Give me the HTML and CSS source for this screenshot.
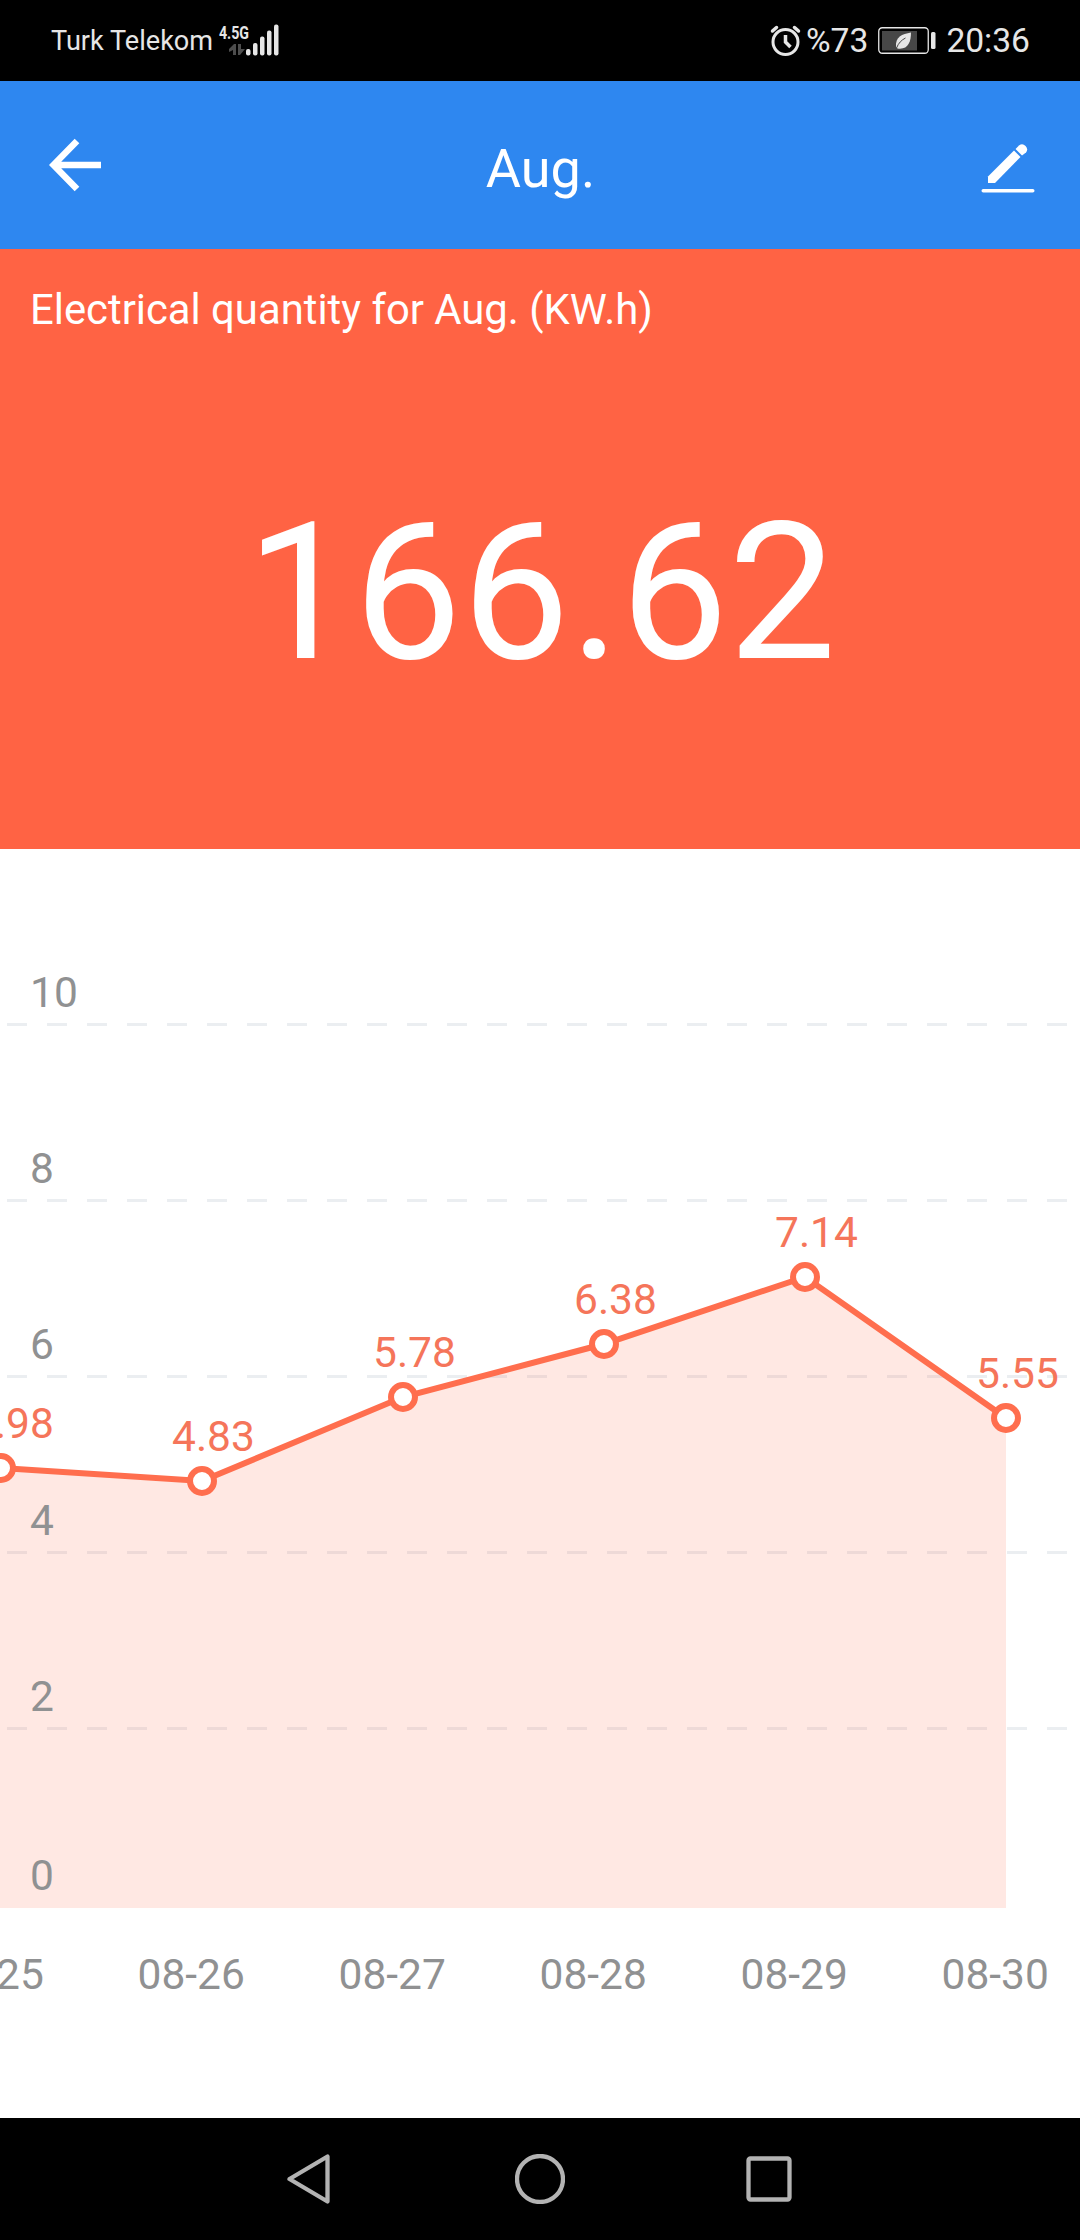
FILE: index.html
```
<!DOCTYPE html>
<html lang="en">
<head>
    <meta charset="UTF-8">
    <meta name="viewport" content="width=device-width, initial-scale=1.0">
    <title>Aug.</title>
    <link rel="stylesheet" href="styles.css">
</head>
<body>
    <div class="status-bar">
        <span class="carrier">Turk Telekom</span>
        <svg class="signal" width="62" height="34" viewBox="0 0 62 34">
            <text class="signal-type" x="0" y="15" textLength="30" lengthAdjust="spacingAndGlyphs">4.5G</text>
            <path d="M10 28v-3l5-5h2v11h-3v-5zM19 20h3v5h4l-5 6h-2z" fill="#4d4d4d"/>
            <g fill="#e6e6e6">
                <rect x="27" y="25" width="4.5" height="6.5" rx="2"/>
                <rect x="34" y="19" width="4.5" height="12.5" rx="2"/>
                <rect x="41" y="12.5" width="4.5" height="19" rx="2"/>
                <rect x="48" y="6.5" width="4.5" height="25" rx="2"/>
                <rect x="55" y="0.5" width="4.5" height="31" rx="2"/>
            </g>
        </svg>
        <div class="status-right">
            <svg width="32" height="32" viewBox="0 0 32 32" fill="none" stroke="#e6e6e6">
                <circle cx="15.5" cy="17" r="12.5" stroke-width="3"/>
                <path d="M15.5 10v7l5 5" stroke-width="3.5"/>
                <path d="M2.500 6l4-3.500M28.500 6l-4-3.500" stroke-width="3.5" stroke-linecap="round"/>
            </svg>
            <span class="battery-level">%73</span>
            <svg class="battery" width="59" height="28" viewBox="0 0 59 28">
                <rect x="0.75" y="0.75" width="49.5" height="25.5" rx="3.5" fill="none" stroke="#e6e6e6" stroke-width="1.3"/>
                <rect x="4" y="4" width="35" height="19.5" fill="#474747"/>
                <path d="M18 20C17 10 24 7 33 5.5C33 15 30 23 19.5 21.5z" fill="#e6e6e6"/>
                <path d="M18.5 21c2-5 5-8 9-10" fill="none" stroke="#474747" stroke-width="1"/>
                <rect x="53" y="5" width="4.5" height="17" rx="1.5" fill="#e6e6e6"/>
            </svg>
            <span class="clock">20:36</span>
        </div>
    </div>

    <div class="header">
        <svg width="54" height="54" viewBox="0 0 54 54" fill="none" stroke="#fff" stroke-width="6.5">
            <path d="M52 27H5M28 3L4.500 27l23.500 24"/>
        </svg>
        <h1>Aug.</h1>
        <svg class="edit" width="54" height="54" viewBox="0 0 54 54" fill="#fff">
            <path d="M7 34.5L33 8.500l6.500 6.500-25.500 26H7z"/>
            <path d="M34.500 7l3.500-3.500a5 5 0 0 1 7 7L41 13.500z"/>
            <rect x="0.500" y="47" width="53" height="3.500" rx="1.750"/>
        </svg>
    </div>

    <div class="summary">
        <div class="summary-title">Electrical quantity for Aug. (KW.h)</div>
        <div class="summary-value">166.62</div>
    </div>

    <svg class="chart" width="1080" height="1269" viewBox="0 849 1080 1269">
        <g class="grid">
            <path d="M7 1024.500H1067"/>
            <path d="M7 1200.500H1067"/>
            <path d="M7 1376.500H1067"/>
            <path d="M7 1552.500H1067"/>
            <path d="M7 1728.500H1067"/>
        </g>
        <path class="area" d="M0 1468L1 1468L202 1481L403 1397L604 1344L805 1277L1006 1418V1908H0z"/>
        <path class="line" d="M1 1468L202 1481L403 1397L604 1344L805 1277L1006 1418"/>
        <g class="points">
            <circle cx="1" cy="1468" r="12"/>
            <circle cx="202" cy="1481" r="12"/>
            <circle cx="403" cy="1397" r="12"/>
            <circle cx="604" cy="1344" r="12"/>
            <circle cx="805" cy="1277" r="12"/>
            <circle cx="1006" cy="1418" r="12"/>
        </g>
        <g class="values">
            <text x="-29" y="1438">4.98</text>
            <text x="172" y="1451">4.83</text>
            <text x="373" y="1367">5.78</text>
            <text x="574" y="1314">6.38</text>
            <text x="775" y="1247">7.14</text>
            <text x="976" y="1388">5.55</text>
        </g>
        <g class="axis">
            <text x="30" y="1007">10</text>
            <text x="30" y="1183">8</text>
            <text x="30" y="1359">6</text>
            <text x="30" y="1535">4</text>
            <text x="30" y="1711">2</text>
            <text x="30" y="1890">0</text>
            <text x="-63.500" y="1989">08-25</text>
            <text x="137.500" y="1989">08-26</text>
            <text x="338.500" y="1989">08-27</text>
            <text x="539.500" y="1989">08-28</text>
            <text x="740.500" y="1989">08-29</text>
            <text x="941.500" y="1989">08-30</text>
        </g>
    </svg>

    <div class="nav-bar">
        <svg width="50" height="50" viewBox="0 0 50 50">
            <path d="M4.500 25L42.500 2.500V47.500z"/>
        </svg>
        <svg width="50" height="50" viewBox="0 0 50 50">
            <circle cx="25" cy="25" r="23"/>
        </svg>
        <svg width="50" height="50" viewBox="0 0 50 50">
            <rect x="3.500" y="4.500" width="41" height="41" rx="2"/>
        </svg>
    </div>
</body>
</html>
```
FILE: styles.css
```
* { box-sizing: border-box; }
body { margin: 0; font-family: Roboto, sans-serif; background-color: #fff; }
svg { display: block; flex: none; }

.status-bar { display: flex; height: 81px; padding: 0 50px 0 51px; background-color: #000; color: #e6e6e6; line-height: 83px; white-space: nowrap; }
.carrier { width: 168px; font-size: 27.1px; }
.signal { margin-top: 24px; overflow: visible; }
.signal-type { font-family: Roboto, sans-serif; font-size: 19px; font-weight: bold; fill: #e6e6e6; }
.status-right { display: flex; align-items: center; margin-left: auto; font-size: 33.6px; }
.battery-level { margin-left: 4px; }
.battery { margin: 0 9px 0 10px; }

.header { display: flex; align-items: center; justify-content: space-between; height: 168px; padding: 0 45px 0 49px; background-color: #2e87f0; color: #fff; }
.header h1 { margin: 0; padding: 8px 3px 0 0; font-size: 54px; font-weight: normal; line-height: 64px; }
.edit { margin-top: 7px; }

.summary { height: 600px; padding-top: 31px; background-color: #ff6344; color: #fff; }
.summary-title { padding-left: 30px; font-size: 41.8px; line-height: 60px; }
.summary-value { padding-left: 2px; margin-top: 139px; font-size: 192px; line-height: 228px; text-align: center; }

.grid { stroke: #ebeef1; stroke-width: 3; stroke-dasharray: 20 20; }
.area { fill: #ff6e4e; fill-opacity: 0.16; }
.line { fill: none; stroke: #ff6e4e; stroke-width: 6; }
.points { fill: #fff; stroke: #ff6e4e; stroke-width: 6; }
.values { font-size: 42.5px; fill: #f5755a; }
.axis { font-size: 42.5px; fill: #909192; }

.nav-bar { display: flex; align-items: center; justify-content: center; gap: 180px; height: 122px; background-color: #000; }
.nav-bar svg { fill: none; stroke: #b3b3b3; stroke-width: 4.3; stroke-linejoin: round; }
```
